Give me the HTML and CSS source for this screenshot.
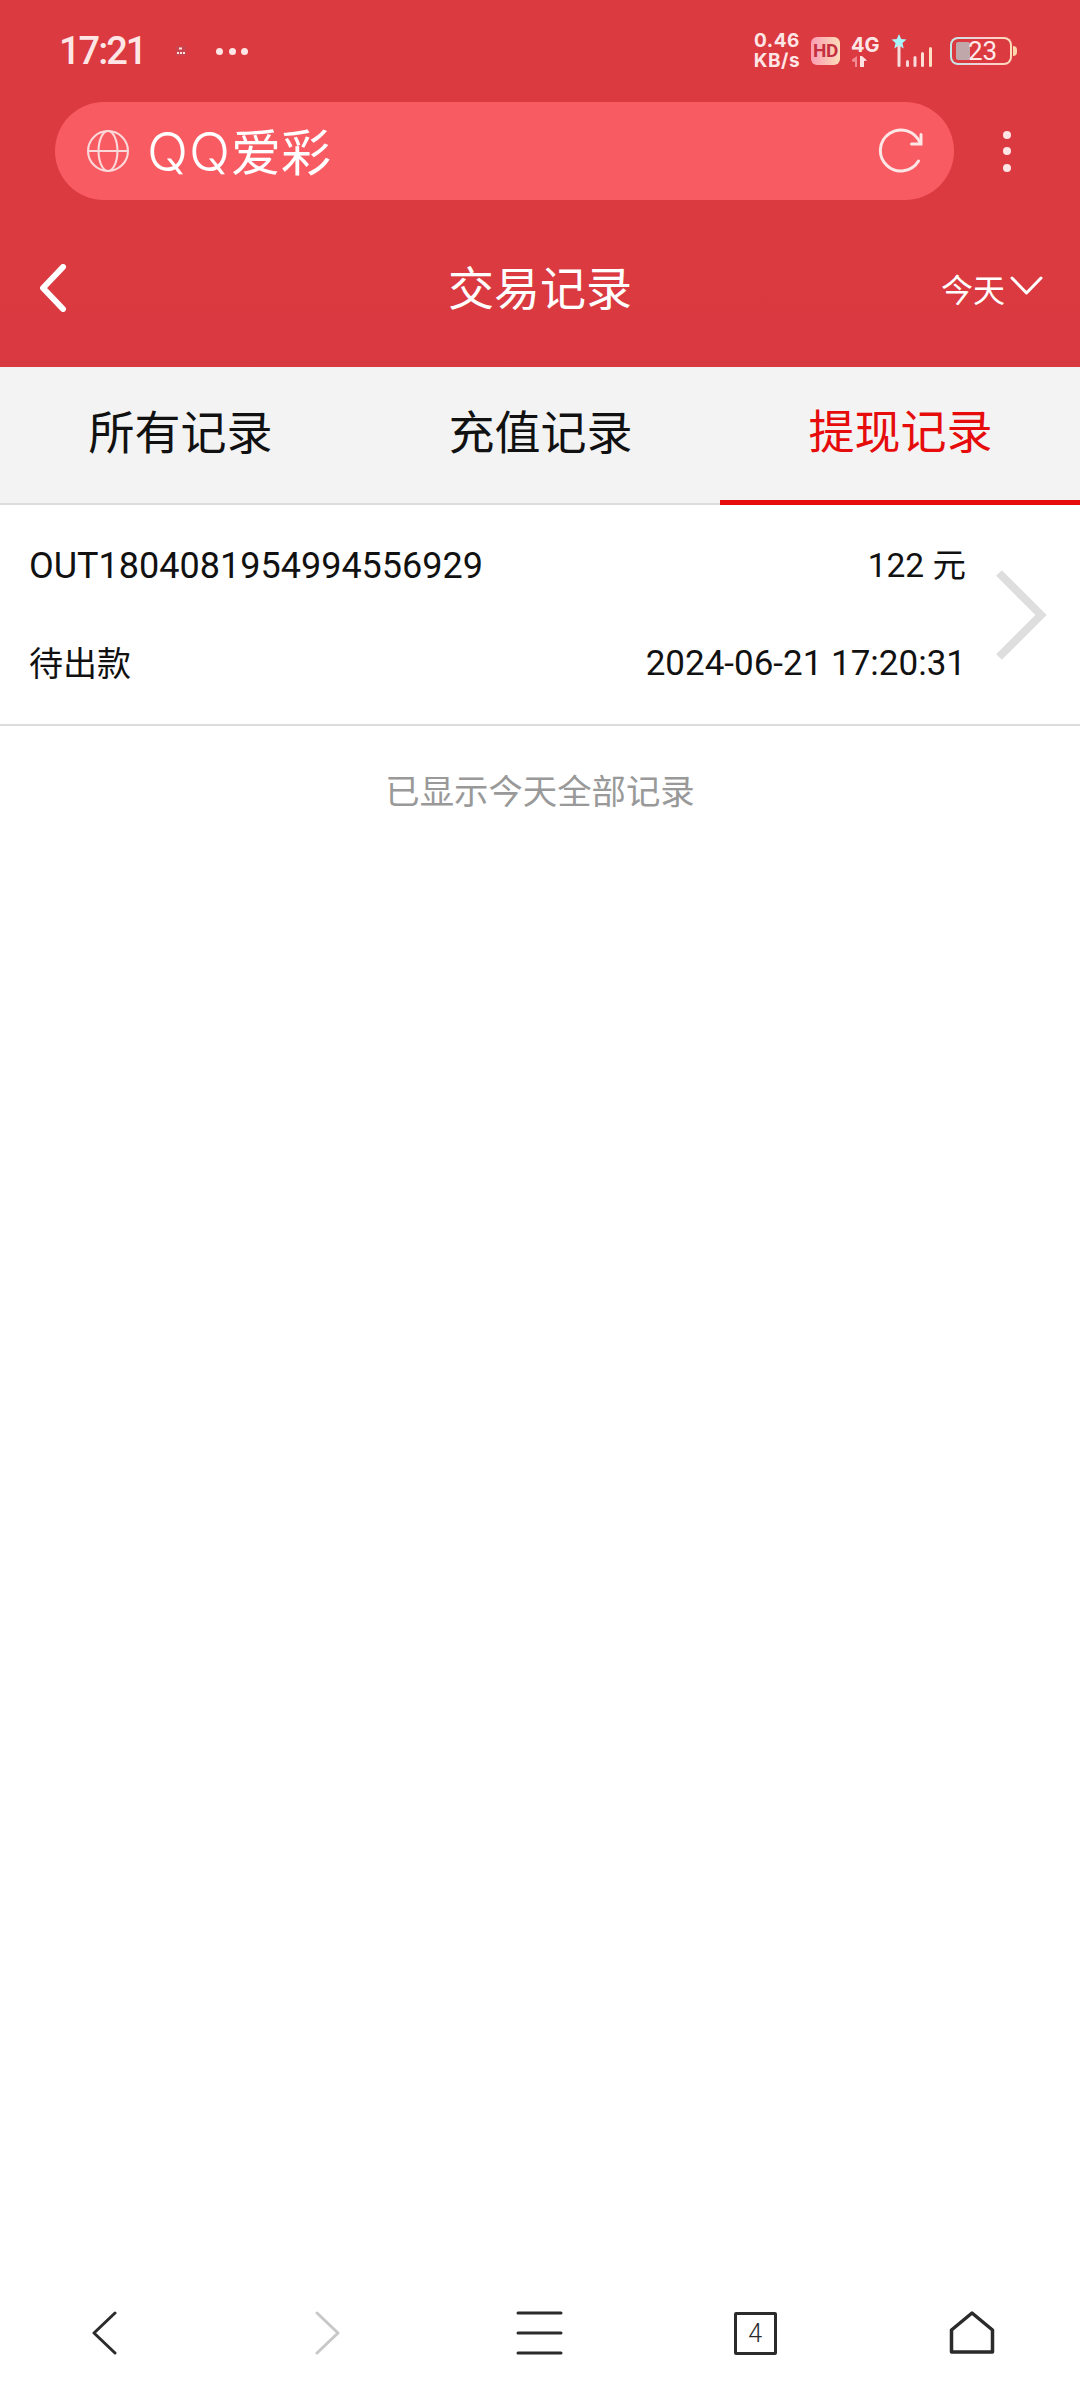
FILE: index.html
```html
<!DOCTYPE html>
<html lang="zh">
<head>
    <meta charset="UTF-8">
    <title>交易记录</title>
    <link rel="stylesheet" href="styles.css">
</head>
<body>
    <header class="top-red">
        <div class="status-bar">
            <div class="status-left">
                <span class="clock">17:21</span>
                <svg class="mini-app" width="10" height="10" viewBox="0 0 10 10">
                    <rect width="10" height="10" fill="#c9444c"/>
                    <path d="M3 1.5h3v2H3zM1 6h2v2H1zM4 6h2v2H4zM7 6h2v2H7z" fill="#ffe3e3"/>
                </svg>
                <span class="more-dots"><i></i><i></i><i></i></span>
            </div>
            <div class="status-right">
                <div class="speed"><span>0.46</span><span>KB/s</span></div>
                <div class="hd-badge">HD</div>
                <div class="net">
                    <span>4G</span>
                    <svg width="16" height="11" viewBox="0 0 16 11">
                        <path d="M1 3.5L6 0v11H4V6L1 5.5z" fill="#f08a90"/>
                        <path d="M9 0h2l5 4.5-3 .5v6H9z" fill="#ffe3e3"/>
                    </svg>
                </div>
                <svg class="signal" width="42" height="33" viewBox="0 0 42 33">
                    <path d="M8 0l2.200 5 5.300.5-4 3.600 1.200 5.300L8 11.600 3.300 14.400l1.200-5.300-4-3.600L5.800 5z" fill="#a8f4fb"/>
                    <rect x="6.500" y="11" width="3" height="22" rx="1.500" fill="#f7dcdc"/>
                    <rect x="15" y="26" width="3" height="7" rx="1.500" fill="#f9d3d3"/>
                    <rect x="22.500" y="22" width="3" height="11" rx="1.500" fill="#fbdada"/>
                    <rect x="30" y="18" width="3" height="15" rx="1.500" fill="#fde0d6"/>
                    <rect x="38" y="13" width="3" height="20" rx="1.500" fill="#fde0c4"/>
                </svg>
                <div class="battery">
                    <div class="battery-shell"><div class="battery-fill"></div></div>
                    <span class="battery-num">23</span>
                    <div class="battery-tip"></div>
                </div>
            </div>
        </div>

        <div class="address-row">
            <div class="address-pill">
                <svg width="42" height="42" viewBox="0 0 40 40" fill="none" stroke="#fbd9da" stroke-width="2">
                    <circle cx="20" cy="20" r="19"/>
                    <ellipse cx="20" cy="20" rx="9" ry="19"/>
                    <path d="M1 20h38"/>
                </svg>
                <span class="address-text"><span class="address-latin">QQ</span>爱彩</span>
                <svg class="reload" width="46" height="46" viewBox="0 0 46 46" fill="none" stroke="#fde6e6" stroke-width="3" stroke-linecap="round">
                    <path d="M42 15A20.500 20.500 0 1 0 40.500 33"/>
                    <path d="M43 6.500V16H33.500"/>
                </svg>
            </div>
            <div class="kebab"><i></i><i></i><i></i></div>
        </div>

        <nav class="title-bar">
            <svg class="nav-back" width="28" height="48" viewBox="0 0 28 48" fill="none" stroke="#fff" stroke-width="6" stroke-linecap="round" stroke-linejoin="round">
                <path d="M24 3L4 24l20 21"/>
            </svg>
            <h1 class="page-title">交易记录</h1>
            <div class="date-pick">
                <span>今天</span>
                <svg width="33" height="19" viewBox="0 0 33 19" fill="none" stroke="#fff" stroke-width="3" stroke-linecap="round" stroke-linejoin="round">
                    <path d="M2 2l14.500 15L31 2"/>
                </svg>
            </div>
        </nav>
    </header>

    <div class="tabs">
        <div class="tab">所有记录</div>
        <div class="tab">充值记录</div>
        <div class="tab active">提现记录</div>
    </div>

    <main class="content">
        <div class="record">
            <div class="record-body">
                <div class="record-line">
                    <span class="order-no">OUT1804081954994556929</span>
                    <span class="order-amount">122 元</span>
                </div>
                <div class="record-line">
                    <span class="order-state">待出款</span>
                    <span>2024-06-21 17:20:31</span>
                </div>
            </div>
            <svg class="record-arrow" width="52" height="90" viewBox="0 0 52 90" fill="none" stroke="#dedede" stroke-width="8">
                <path d="M4 3l42 42L4 87"/>
            </svg>
        </div>
        <p class="list-end">已显示今天全部记录</p>
    </main>

    <footer class="browser-bar">
        <svg width="60" height="44" viewBox="0 0 60 44" fill="none" stroke="#2b2b2b" stroke-width="3" stroke-linecap="round" stroke-linejoin="round">
            <path d="M40 2L19 22l21 20"/>
        </svg>
        <svg width="60" height="44" viewBox="0 0 60 44" fill="none" stroke="#c8c8c8" stroke-width="3" stroke-linecap="round" stroke-linejoin="round">
            <path d="M25 2l21 20-21 20"/>
        </svg>
        <svg width="60" height="44" viewBox="0 0 60 44" fill="none" stroke="#2b2b2b" stroke-width="3" stroke-linecap="round">
            <path d="M9 2h43M9 22h43M9 42h43"/>
        </svg>
        <div class="tab-slot"><div class="tab-count">4</div></div>
        <svg width="60" height="44" viewBox="0 0 60 44" fill="none" stroke="#2b2b2b" stroke-width="3.500" stroke-linejoin="round">
            <path d="M30 2L9.500 19v22h41V19z"/>
        </svg>
    </footer>
</body>
</html>
```

FILE: styles.css
```css
* {
    box-sizing: border-box;
}

body {
    margin: 0;
    height: 2400px;
    display: flex;
    flex-direction: column;
    background-color: #fff;
    font-family: Roboto, "Noto Sans CJK SC", sans-serif;
    color: #111;
}

.top-red {
    height: 367px;
    background: linear-gradient(#db3a41, #db3a41 75%, #d8383f);
    color: #fff;
}

/* status bar */
.status-bar {
    height: 102px;
    padding: 0 63px 0 59px;
    display: flex;
    justify-content: space-between;
    align-items: center;
    color: #ffe6e6;
}

.status-left {
    display: flex;
    align-items: center;
}

.clock {
    font-size: 38px;
    font-weight: 500;
    letter-spacing: -2px;
    width: 117px;
}

.more-dots {
    display: flex;
    gap: 5.500px;
    margin-left: 30px;
}

.more-dots i {
    width: 7px;
    height: 7px;
    border-radius: 50%;
    background-color: #ffe6e6;
}

.status-right {
    display: flex;
    align-items: center;
}

.speed {
    display: flex;
    flex-direction: column;
    align-items: center;
    font-family: Inter, Roboto, sans-serif;
    font-size: 19px;
    line-height: 20px;
    font-weight: 700;
    letter-spacing: 0.5px;
    width: 48px;
}

.hd-badge {
    width: 29px;
    height: 28px;
    margin-left: 10px;
    border-radius: 6px;
    background: linear-gradient(90deg, #fb9db4, #fddcb8);
    color: #c4303f;
    font-size: 19px;
    font-weight: 700;
    line-height: 28px;
    text-align: center;
    letter-spacing: -0.5px;
}

.net {
    width: 30px;
    margin-left: 11px;
    font-family: Inter, Roboto, sans-serif;
    font-size: 20px;
    line-height: 20px;
    font-weight: 700;
    display: flex;
    flex-direction: column;
    gap: 1px;
}

.net svg {
    display: block;
}

.signal {
    margin-left: 10px;
    margin-top: -1px;
}

.battery {
    position: relative;
    margin-left: 17px;
    display: flex;
    align-items: center;
    gap: 1px;
}

.battery-shell {
    width: 62px;
    height: 28px;
    padding: 3px 4px;
    border: 2.500px solid transparent;
    border-radius: 8px;
    background: linear-gradient(#db3a41, #db3a41) padding-box,
        linear-gradient(90deg, #bfe9ea, #f9cdd2 55%, #fddcb8) border-box;
}

.battery-fill {
    width: 14px;
    height: 100%;
    border-radius: 2px;
    background-color: #c0a7a9;
}

.battery-num {
    position: absolute;
    left: 18px;
    top: 1px;
    font-size: 26px;
    line-height: 27px;
    font-weight: 400;
    color: #ffeaea;
}

.battery-tip {
    width: 4px;
    height: 10px;
    border-radius: 0 4px 4px 0;
    background-color: #fcd5a8;
}

/* address bar */
.address-row {
    display: flex;
    align-items: center;
    padding-left: 55px;
}

.address-pill {
    width: 899px;
    height: 98px;
    padding: 0 30px 0 32px;
    border-radius: 49px;
    background-color: #f85c62;
    display: flex;
    align-items: center;
}

.address-text {
    margin: 2px 0 0 18px;
    flex: 1;
    font-size: 50px;
    line-height: 1;
    color: #fff;
}

.address-latin {
    font-family: Inter, Roboto, sans-serif;
    font-size: 54px;
    font-weight: 300;
    letter-spacing: 1px;
}

.kebab {
    margin-left: 49px;
    display: flex;
    flex-direction: column;
    gap: 8.500px;
}

.kebab i {
    width: 8px;
    height: 8px;
    border-radius: 50%;
    background-color: #ffe6e6;
}

/* page title */
.title-bar {
    height: 167px;
    padding: 0 37px 0 39px;
    display: flex;
    align-items: center;
    position: relative;
}

.nav-back {
    margin-top: 8px;
}

.page-title {
    position: absolute;
    left: 0;
    right: 0;
    margin: 2px 0 0;
    text-align: center;
    font-size: 46px;
    font-weight: 400;
}

.date-pick {
    margin-left: auto;
    margin-top: 9px;
    display: flex;
    align-items: center;
    gap: 5px;
    font-size: 32px;
}

.date-pick svg {
    margin-top: -6px;
}

/* tabs */
.tabs {
    height: 138px;
    display: flex;
    background-color: #f3f3f3;
    border-bottom: 2px solid #dcdcdc;
}

.tab {
    flex: 1;
    display: flex;
    justify-content: center;
    align-items: center;
    padding: 0 0 12px 1px;
    font-size: 46px;
    color: #111;
}

.tab.active {
    color: #e60c0c;
    margin-bottom: -2px;
    border-bottom: 5px solid #e60c0c;
}

/* record list */
.content {
    flex: 1;
}

.record {
    height: 221px;
    display: flex;
    align-items: center;
    padding: 0 33px 0 29px;
    border-bottom: 2px solid #dcdcdc;
}

.record-body {
    flex: 1;
    display: flex;
    flex-direction: column;
    gap: 48px;
    padding-right: 29px;
}

.record-line {
    display: flex;
    justify-content: space-between;
    font-size: 35px;
    line-height: 50px;
}

.order-no {
    font-size: 36px;
}

.order-amount {
    font-size: 33.500px;
}

.order-state {
    font-size: 34px;
}

.list-end {
    margin: 41px 0 0;
    text-align: center;
    font-size: 34.400px;
    line-height: 50px;
    color: #999;
}

/* browser toolbar */
.browser-bar {
    height: 134px;
    padding: 0 78px 0 75px;
    display: flex;
    justify-content: space-between;
    align-items: center;
}

.tab-slot {
    width: 60px;
    display: flex;
    justify-content: center;
}

.tab-count {
    width: 43px;
    height: 43px;
    border: 3.500px solid #2b2b2b;
    border-radius: 2px;
    display: flex;
    justify-content: center;
    align-items: center;
    font-size: 25px;
    font-weight: 300;
    color: #2b2b2b;
}
```
